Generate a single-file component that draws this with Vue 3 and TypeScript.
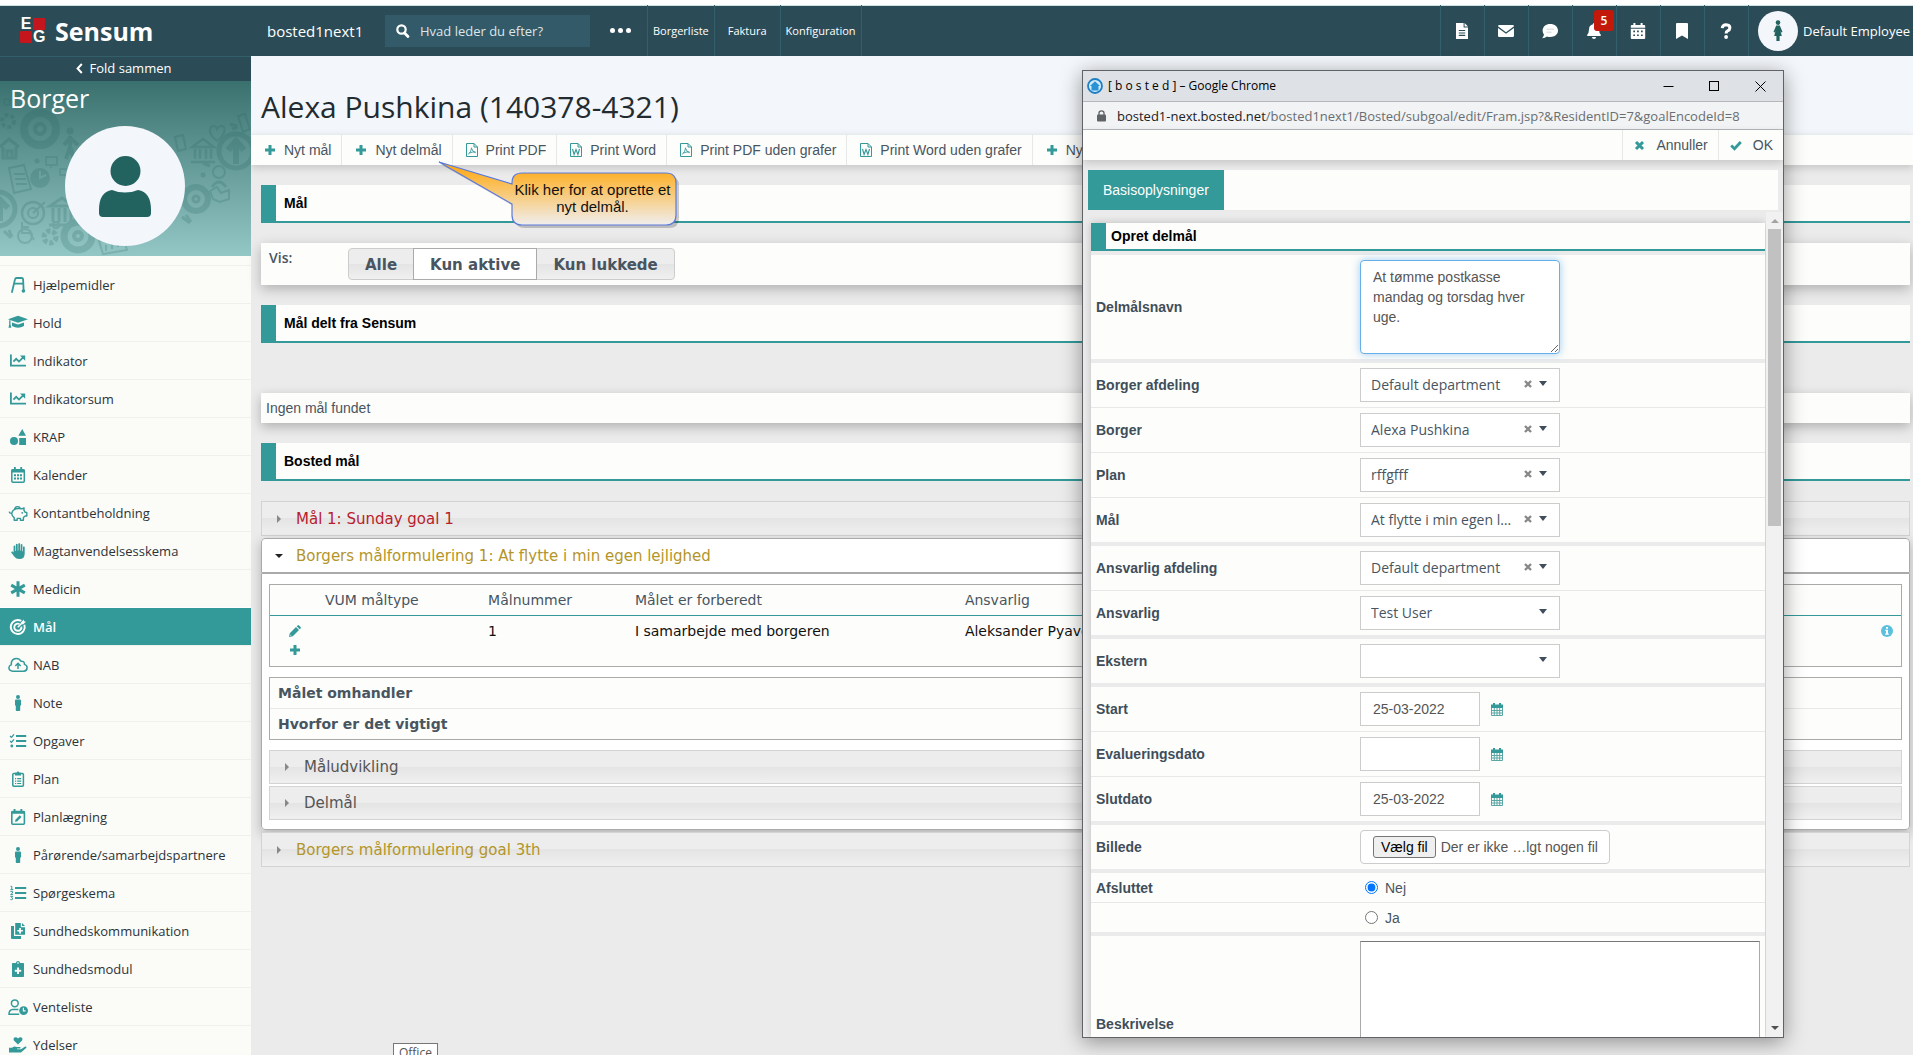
<script setup lang="ts">
import { ref } from 'vue'

interface MenuItem { label: string; icon: string; active?: boolean }
interface FieldRow {
  id: string
  label: string
  kind: 'area' | 'select' | 'date' | 'file' | 'radio' | 'description'
  value?: string
  clearable?: boolean
}

const st = 'fill="none" stroke="currentColor"'

/* Menu glyphs, drawn on a 20 x 16 grid */
const menuIcons: Record<string, string> = {
  walker: `<path ${st} stroke-width="1.8" stroke-linecap="round" d="M4 15L7 2.4Q7.3 1 8.6 1H13.6Q15 1 15.1 2.4L15.6 13M6.2 6.6H15.2"/><circle cx="15.4" cy="14" r="1.8"/>`,
  cap: `<path d="M10 .8L20 4.2 10 7.8 0 4.2zM4 7.4L10 9.5 16 7.4V11Q10 14.6 4 11zM1.2 5.2h1.3v4.4l.8 3.2H.5l.7-3.2z"/>`,
  chart: `<path ${st} stroke-width="1.8" d="M2.9 1.5V12.6H18M5.4 8.6L8.2 5.8 11 8.6 15.4 4.2"/><path d="M12 2.6h5.2v5.2z"/>`,
  shapes: `<path d="M14.2 0L18 6.8H10.3zM11.2 8.9H18V16H11.2z"/><circle cx="6" cy="12" r="4"/>`,
  calendar: `<rect ${st} stroke-width="1.5" x="3.8" y="2.8" width="12.5" height="12.4" rx="1.2"/><path d="M3.5 2.4h13v3h-13zM6 0h1.8v3H6zM12.3 0h1.8v3h-1.8zM6 7.2h2v2H6zM9 7.2h2v2H9zM12 7.2h2v2h-2zM6 10.4h2v2H6zM9 10.4h2v2H9zM12 10.4h2v2h-2z"/>`,
  piggy: `<path ${st} stroke-width="1.4" stroke-linejoin="round" d="M6.2 4.6Q8 3.4 11 3.6L14 3.8 16 2.8V5.4L17.2 7.4H18.8V11H17.2L15.4 12.6V15.2H12.4V13.4H9.2V15.2H6.2V12.6Q3.6 10.8 3.8 8Q4.2 5.8 6.2 4.6zM6.6 4.2A3 3 0 0 1 12.4 3.6M3.8 8.4Q1.4 8.6 1.2 6.6"/><circle cx="14.2" cy="7.8" r=".9"/>`,
  hand: `<path d="M5.6 3q.9-.8 1.7 0V8h.6V1.2q.9-1 1.8 0V7.6h.6V.6q.9-.9 1.8 0V7.6h.6V1.4q.9-.8 1.7 0V8.2h.6V3.8q.9-.7 1.7 0V10.5Q16.7 16 11.4 16 8 16 6.2 13.5L3.2 9.6Q3.4 8.2 4.8 8.5L5.6 9.4z"/>`,
  asterisk: `<path ${st} stroke-width="3" d="M10 .2V15.8M3.2 4.1L16.8 11.9M3.2 11.9L16.8 4.1"/>`,
  target: `<path ${st} stroke-width="1.9" d="M13.2 1.9A7 7 0 1 0 16.4 5.8M11.5 5A3.6 3.6 0 1 0 13.4 7.6"/><path ${st} stroke-width="1.6" d="M9.8 8.2L14.5 3.5"/><path d="M13 3.4L15.6.4l.4 1.8 1.9.5L15 5.4 13.2 5z"/>`,
  cloud: `<path ${st} stroke-width="1.5" d="M5 14.2Q1 13.9 .9 10.7 1 8.3 3.3 7.6 3 2 8.2 1.6 11.3 1.5 12.9 4.2 16.4 3.8 16.5 7.4 19.2 8.2 19.1 10.9 18.9 14 15.7 14.2zM10 12V6.5M7.3 9L10 6.3 12.7 9"/>`,
  person: `<circle cx="10" cy="2" r="2"/><path d="M7 5.6Q7 4.6 8 4.6H12Q13 4.6 13 5.6V10.4H12.2V15.2Q12.2 16 11.4 16H8.6Q7.8 16 7.8 15.2V10.4H7z"/>`,
  tasks: `<path d="M8 2h10.2v2.1H8zM8 7h10.2v2.1H8zM8 12h10.2v2.1H8z"/><path ${st} stroke-width="1.3" d="M2 3L3.5 4.4 6 1.3M2 8L3.5 9.4 6 6.3"/><circle cx="3.8" cy="13" r="1.4"/>`,
  clipboard: `<rect ${st} stroke-width="1.5" x="4.8" y="2.6" width="10.6" height="12.6" rx="1"/><path d="M7 1.7h1.6a1.5 1.5 0 0 1 2.9 0H13V4.6H7zM7 7h1.2v1.2H7zM9.2 7H13.2v1.2H9.2zM7 9.5h1.2v1.2H7zM9.2 9.5H13.2v1.2H9.2zM7 12h1.2v1H7zM9.2 12H13.2v1H9.2z"/>`,
  calendarEdit: `<rect ${st} stroke-width="1.6" x="3.8" y="2.6" width="12.6" height="12.6" rx="1"/><path d="M3.5 2h13.2v2.8H3.5zM5.6 0h1.9v3H5.6zM12.4 0h1.9v3h-1.9zM7 12.8L7.4 10.7 11.8 6.3 13.5 8 9.1 12.4z"/>`,
  numbered: `<path d="M7 2h11.2v2H7zM7 7h11.2v2H7zM7 12h11.2v2H7z"/><path ${st} stroke-width="1" d="M2.6 1.3H3.8V4.6M2.4 4.6H5.2M2.4 6.4H4.6V8L2.6 9.6H5M2.4 11.4H4.7L3.6 12.6Q5 12.8 4.6 14.2 3.8 15 2.4 14.5"/>`,
  copyMedical: `<path d="M3 3H6V13H13V16H4Q3 16 3 15zM7.2 0H12.8V4.2H17V11.8H7.2zM14 0L17 3.1H14z"/><path fill="#fbfbf8" d="M11.2 5h1.8v1.9h1.9v1.7H13v1.9h-1.8V8.6H9.3V6.9h1.9z"/>`,
  clipMedical: `<path d="M4 2.8Q4 2 4.8 2H7.8Q8.4 0 10 0T12.2 2H15.2Q16 2 16 2.8V15.2Q16 16 15.2 16H4.8Q4 16 4 15.2z"/><path fill="#fbfbf8" d="M9 6.5h2v2.2h2.2v2H11v2.2H9v-2.2H6.8v-2H9zM9.3 1.3h1.4v1.4H9.3z"/>`,
  userClock: `<circle ${st} stroke-width="1.5" cx="6.8" cy="4.3" r="3.4"/><path ${st} stroke-width="1.5" d="M10.4 10.6H4.6Q1 11 1 15.2H11.2"/><circle cx="15.6" cy="11.6" r="4.4"/><path stroke="#fbfbf8" stroke-width="1.2" fill="none" d="M15.4 8.8V11.9H17.6"/>`,
  handHeart: `<path d="M10 7.6L5.9 3.6Q4.8 1.8 6.4.6 8.4-.3 10 1.6 11.6-.3 13.6.6 15.2 1.8 14.1 3.6zM1 10.8H4Q6.4 8.9 8.4 9.9H12Q13 10.4 12.4 11.5H9V12.2H13L17.2 9.5Q18.8 9.6 18.4 10.8L13.6 15Q12.8 15.6 11.8 15.6H1z"/>`,
}

/* Header glyphs, 16 x 16 grid */
const topIcons: Record<string, string> = {
  file: `<path fill-rule="evenodd" d="M2 0H9.6V4.4H14V16H2zM10.6 0L14 3.4H10.6zM4.8 7v1.1h6.4V7zM4.8 9.4v1.1h6.4V9.4zM4.8 11.8v1.1h6.4v-1.1z"/>`,
  mail: `<path d="M0 3.2Q0 2 1.4 2H14.6Q16 2 16 3.2L8 9.3zM0 5L8 10.8 16 5V12.8Q16 14 14.6 14H1.4Q0 14 0 12.8z"/>`,
  chat: `<path fill-rule="evenodd" d="M8.2 1C12.6 1 16 3.7 16 7.6S12.6 14 8.2 14Q6.4 14 5 13.4 3 15.2.2 15.2 1.8 13.4 2 11.5.6 9.9.6 7.6C.6 3.7 4 1 8.2 1z"/><path fill="#dfe3e8" d="M4.6 5.4h7.4v1.5H4.6zM4.6 8.6h5v1.5h-5z"/>`,
  bell: `<path d="M8 0Q9 0 9 1.3 13 2.2 13 6.6 13 10.3 15 11.9 15 13 14 13H2Q1 13 1 11.9 3 10.3 3 6.6 3 2.2 7 1.3 7 0 8 0zM5.9 14H10.1Q9.8 16 8 16T5.9 14z"/>`,
  calendar: `<path fill-rule="evenodd" d="M3.4 0h2v2h5.2V0h2v2H14.2Q15.2 2 15.2 3V4.7H.8V3Q.8 2 1.8 2H3.4zM.8 5.8H15.2V15Q15.2 16 14.2 16H1.8Q.8 16 .8 15zM3.3 7.6v1.7H5V7.6zM7.1 7.6v1.7h1.7V7.6zM11 7.6v1.7h1.7V7.6zM3.3 11.4v1.7H5v-1.7zM7.1 11.4v1.7h1.7v-1.7zM11 11.4v1.7h1.7v-1.7z"/>`,
  bookmark: `<path d="M2 1Q2 0 3 0H13Q14 0 14 1V16L8 12.6 2 16z"/>`,
  help: `<path ${st} stroke-width="3" d="M4.2 5.2Q4.6 1.7 8.2 1.7 11.9 1.9 11.9 4.9 11.8 6.9 9.6 7.9 8.1 8.6 8.1 10.6"/><circle cx="8.1" cy="14" r="1.9"/>`,
}

const menu: MenuItem[] = [
  { label: 'Hjælpemidler', icon: 'walker' },
  { label: 'Hold', icon: 'cap' },
  { label: 'Indikator', icon: 'chart' },
  { label: 'Indikatorsum', icon: 'chart' },
  { label: 'KRAP', icon: 'shapes' },
  { label: 'Kalender', icon: 'calendar' },
  { label: 'Kontantbeholdning', icon: 'piggy' },
  { label: 'Magtanvendelsesskema', icon: 'hand' },
  { label: 'Medicin', icon: 'asterisk' },
  { label: 'Mål', icon: 'target', active: true },
  { label: 'NAB', icon: 'cloud' },
  { label: 'Note', icon: 'person' },
  { label: 'Opgaver', icon: 'tasks' },
  { label: 'Plan', icon: 'clipboard' },
  { label: 'Planlægning', icon: 'calendarEdit' },
  { label: 'Pårørende/samarbejdspartnere', icon: 'person' },
  { label: 'Spørgeskema', icon: 'numbered' },
  { label: 'Sundhedskommunikation', icon: 'copyMedical' },
  { label: 'Sundhedsmodul', icon: 'clipMedical' },
  { label: 'Venteliste', icon: 'userClock' },
  { label: 'Ydelser', icon: 'handHeart' },
]

const topTools = [
  { icon: 'file', name: 'Dokumenter' },
  { icon: 'mail', name: 'Post' },
  { icon: 'chat', name: 'Beskeder' },
  { icon: 'bell', name: 'Notifikationer', badge: 5 },
  { icon: 'calendar', name: 'Kalender' },
  { icon: 'bookmark', name: 'Bogmærker' },
  { icon: 'help', name: 'Hjælp' },
]

const plus = '<path d="M4.5 1h3v3.5H11v3H7.5V11h-3V7.5H1v-3h3.5z"/>'
const docFrame = 'fill="none" stroke="currentColor" stroke-width="1" d="M.5 .5H8L11.5 4V13.5H.5zM8 .5V4H11.5"'
const pdf = `<path ${docFrame}/><path fill="none" stroke="currentColor" stroke-width=".9" d="M2.3 11.4Q5.3 8.5 5.7 4.6M5.7 5.5Q6.3 8.6 9.7 9.8M3.4 10Q6 8.7 9.6 9"/>`
const word = `<path ${docFrame}/><path fill="none" stroke="currentColor" stroke-width="1.1" d="M2.5 6L4.1 11.5 6 6.6 7.9 11.5 9.5 6"/>`
const actions = [
  { label: 'Nyt mål', icon: plus, box: '0 0 12 12' },
  { label: 'Nyt delmål', icon: plus, box: '0 0 12 12' },
  { label: 'Print PDF', icon: pdf, box: '0 0 12 14' },
  { label: 'Print Word', icon: word, box: '0 0 12 14' },
  { label: 'Print PDF uden grafer', icon: pdf, box: '0 0 12 14' },
  { label: 'Print Word uden grafer', icon: word, box: '0 0 12 14' },
  { label: 'Nyt notat', icon: plus, box: '0 0 12 12' },
]

const filters = ['Alle', 'Kun aktive', 'Kun lukkede']
const activeFilter = ref('Kun aktive')

const groups: FieldRow[][] = [
  [{ id: 'name', label: 'Delmålsnavn', kind: 'area' }],
  [
    { id: 'dept', label: 'Borger afdeling', kind: 'select', value: 'Default department', clearable: true },
    { id: 'citizen', label: 'Borger', kind: 'select', value: 'Alexa Pushkina', clearable: true },
    { id: 'plan', label: 'Plan', kind: 'select', value: 'rffgfff', clearable: true },
    { id: 'goal', label: 'Mål', kind: 'select', value: 'At flytte i min egen lejlighed', clearable: true },
  ],
  [
    { id: 'respdept', label: 'Ansvarlig afdeling', kind: 'select', value: 'Default department', clearable: true },
    { id: 'resp', label: 'Ansvarlig', kind: 'select', value: 'Test User' },
  ],
  [{ id: 'ext', label: 'Ekstern', kind: 'select', value: '' }],
  [
    { id: 'start', label: 'Start', kind: 'date', value: '25-03-2022' },
    { id: 'eval', label: 'Evalueringsdato', kind: 'date', value: '' },
    { id: 'end', label: 'Slutdato', kind: 'date', value: '25-03-2022' },
  ],
  [{ id: 'image', label: 'Billede', kind: 'file' }],
  [
    { id: 'no', label: 'Afsluttet', kind: 'radio', value: 'Nej' },
    { id: 'yes', label: '', kind: 'radio', value: 'Ja' },
  ],
  [{ id: 'desc', label: 'Beskrivelse', kind: 'description' }],
]

const subgoal = ref('At tømme postkasse mandag og torsdag hver uge.')
const closed = ref('Nej')
</script>

<template>
  <div class="app">
    <header class="top">
      <div class="brand">
        <span class="logo" aria-hidden="true"><b>E</b><i></i><i></i><b>G</b></span>
        <span class="brand-name">Sensum</span>
      </div>
      <span class="tenant">bosted1next1</span>
      <label class="search">
        <svg width="13" height="14" viewBox="0 0 13 14" aria-hidden="true"><circle cx="5.5" cy="5.5" r="4.2" fill="none" stroke="#fff" stroke-width="2.2" /><path d="M8.5 9L12 12.6" stroke="#fff" stroke-width="2.8" stroke-linecap="round" /></svg>
        <input type="search" placeholder="Hvad leder du efter?" aria-label="Søg">
      </label>
      <button class="dots" aria-label="Flere"><i></i><i></i><i></i></button>
      <nav class="links">
        <a href="#">Borgerliste</a>
        <a href="#" class="mid">Faktura</a>
        <a href="#">Konfiguration</a>
      </nav>
      <div class="tools">
        <button v-for="t in topTools" :key="t.icon" class="tool" :aria-label="t.name">
          <svg width="16" height="16" viewBox="0 0 16 16" fill="currentColor" v-html="topIcons[t.icon]"></svg>
          <span v-if="t.badge" class="badge">{{ t.badge }}</span>
        </button>
        <a href="#" class="user">
          <span class="user-pic">
            <svg width="12" height="21" viewBox="0 0 12 21" fill="#22625f"><circle cx="6" cy="2.6" r="2.3" /><path d="M4.2 5.5H7.8L10.5 12 9.3 12.6 8.5 11 9.8 16H7.6V21H4.4V16H2.2L3.5 11 2.7 12.6 1.5 12z" /></svg>
          </span>
          Default Employee
        </a>
      </div>
    </header>

    <div class="frame">
      <aside class="side">
        <button class="fold">
          <svg width="7" height="11" viewBox="0 0 7 11" aria-hidden="true"><path d="M5.8 1L1.6 5.5 5.8 10" fill="none" stroke="#fff" stroke-width="2" /></svg>
          Fold sammen
        </button>
        <div class="hero">
          <svg class="pattern" viewBox="0 0 251 175" preserveAspectRatio="xMidYMid slice" fill="none" stroke="#22625f" aria-hidden="true">
            <circle cx="40" cy="48" r="16" stroke-width="8" /><circle cx="40" cy="48" r="5" stroke-width="4" />
            <circle cx="236" cy="70" r="17" stroke-width="5" /><path d="M236 83V62M228 69L236 60 244 69" stroke-width="6" />
            <circle cx="196" cy="118" r="12" stroke-width="6" /><circle cx="196" cy="118" r="3" stroke-width="3" />
            <circle cx="78" cy="155" r="14" stroke-width="7" /><circle cx="78" cy="155" r="4" stroke-width="4" />
            <circle cx="-2" cy="128" r="17" stroke-width="5" /><path d="M0 140V120M-7 127L0 119 8 127" stroke-width="6" />
            <circle cx="8" cy="40" r="6" stroke-width="4" stroke-dasharray="4 2" /><circle cx="7" cy="21" r="3" stroke-width="1.5" />
            <path d="M0 66L9 58 19 66M3 66V77H16V66M7 77V70H12V77" stroke-width="3" />
            <path d="M9 87L24 84 31 108 14 112zM14 93H25M15 98H26M16 103H27" stroke-width="2" />
            <circle cx="40" cy="97" r="10" fill="#22625f" stroke="none" /><path d="M40 90V97L46 94" stroke="#6fa9a5" stroke-width="2" />
            <circle cx="33" cy="132" r="11" stroke-width="2.5" /><circle cx="33" cy="132" r="5" stroke-width="2" /><path d="M33 132L45 121" stroke-width="2" />
            <path d="M50 125L62 117 74 125zM53 127V141M59 127V141M65 127V141M71 127V141M49 144H75" stroke-width="3" />
            <circle cx="70" cy="50" r="3.5" fill="#22625f" stroke="none" /><path d="M70 55V66L66 78M70 66L74 78M64 64L70 57 78 64" stroke-width="4" />
            <path d="M46 76H57V84H46zM51 84V87M60 88H68V94H60z" stroke-width="1.5" />
            <path d="M217 60Q207 52 211 46 215 43 217 48 220 43 224 46 227 52 217 60z" stroke-width="2" />
            <path d="M192 66L203 58 214 66zM195 68V78M200 68V78M206 68V78M211 68V78M191 81H215" stroke-width="2.5" />
            <path d="M175 56L183 54 186 68 178 70zM238 35L245 33 250 48 243 51z" stroke-width="2" />
            <circle cx="219" cy="91" r="6" stroke-width="2" /><path d="M212 106Q219 96 226 106" stroke-width="3" />
            <path d="M210 110L217 106 221 112 229 109V118L220 121 213 118z" stroke-width="2" />
            <circle cx="50" cy="156" r="6" stroke-width="5" stroke-dasharray="4 2" /><circle cx="56" cy="144" r="3" stroke-width="2" />
            <path d="M22 141V152H30L34 159M22 146H29" stroke-width="2" /><circle cx="25" cy="155" r="7" stroke-width="2" />
            <path d="M99 160L122 154 127 169 103 173zM106 170V164M112 168V160M118 166V158" stroke-width="2" />
            <path d="M4 150L11 157M9 149L12 156M230 43L237 45M232 48L238 46M182 136L190 142M186 134L191 141M203 82L210 85" stroke-width="3" />
            <circle cx="37" cy="80" r="2.5" fill="#22625f" stroke="none" /><circle cx="203" cy="94" r="2.5" fill="#22625f" stroke="none" />
          </svg>
          <h2>Borger</h2>
          <div class="portrait">
            <svg width="52" height="61" viewBox="0 0 52 61" fill="#22625f" aria-hidden="true"><ellipse cx="26.5" cy="15" rx="15" ry="15" /><path d="M13 34Q19 36.5 26 36.5T39 34Q52 36 52 54V57Q52 61 48 61H4Q0 61 0 57V54Q0 36 13 34z" /></svg>
          </div>
        </div>
        <nav class="menu">
          <a v-for="m in menu" :key="m.label" href="#" :class="{ active: m.active }">
            <svg width="20" height="16" viewBox="0 0 20 16" fill="currentColor" aria-hidden="true" v-html="menuIcons[m.icon]"></svg>
            <span>{{ m.label }}</span>
          </a>
        </nav>
      </aside>

      <main class="main">
        <h1>Alexa Pushkina (140378-4321)</h1>
        <div class="actions">
          <button v-for="a in actions" :key="a.label">
            <svg width="12" height="14" :viewBox="a.box" fill="currentColor" aria-hidden="true" v-html="a.icon"></svg>
            {{ a.label }}
          </button>
        </div>
        <div class="content">
          <h3 class="bar">Mål</h3>
          <section class="card vis">
            <span class="vis-label">Vis:</span>
            <div class="segments">
              <button v-for="f in filters" :key="f" :class="{ on: f === activeFilter }" @click="activeFilter = f">{{ f }}</button>
            </div>
          </section>
          <h3 class="bar">Mål delt fra Sensum</h3>
          <section class="card none">Ingen mål fundet</section>
          <h3 class="bar">Bosted mål</h3>

          <div class="accordion">
            <button class="fold-head red"><i class="arrow"></i>Mål 1: Sunday goal 1</button>
            <div class="opened">
              <button class="fold-head open gold"><i class="arrow down"></i>Borgers målformulering 1: At flytte i min egen lejlighed</button>
              <div class="body">
                <table class="goals">
                  <thead>
                    <tr><th class="c-edit"></th><th class="c-type">VUM måltype</th><th class="c-num">Målnummer</th><th class="c-prep">Målet er forberedt</th><th>Ansvarlig</th><th class="c-info">Info</th></tr>
                  </thead>
                  <tbody>
                    <tr>
                      <td>
                        <div class="row-tools">
                          <button aria-label="Rediger"><svg width="12" height="12" viewBox="0 0 12 12" fill="currentColor"><path fill-rule="evenodd" d="M0 12L.8 8.2 7 2 10 5 3.8 11.2zM1.6 9.4L1.3 10.7 2.6 10.4zM7.7 1.3L8.6.4Q9.3-.2 10 .4L11.6 2Q12.2 2.7 11.6 3.4L10.7 4.3z" /></svg></button>
                          <button aria-label="Tilføj"><svg width="12" height="12" viewBox="0 0 12 12" fill="currentColor" v-html="plus"></svg></button>
                        </div>
                      </td>
                      <td></td><td>1</td><td>I samarbejde med borgeren</td><td>Aleksander Pyavchenko</td>
                      <td class="info"><svg width="12" height="12" viewBox="0 0 12 12" aria-label="Info"><circle cx="6" cy="6" r="6" fill="#5bc0de" /><path fill="#fff" d="M5 2h2v1.7H5zM4.3 4.8H7V8.6h.8V9.8H4.2V8.6H5V6h-.7z" /></svg></td>
                    </tr>
                  </tbody>
                </table>
                <dl class="facts"><dt>Målet omhandler</dt><dt>Hvorfor er det vigtigt</dt></dl>
                <button class="fold-head"><i class="arrow"></i>Måludvikling</button>
                <button class="fold-head"><i class="arrow"></i>Delmål</button>
              </div>
            </div>
            <button class="fold-head gold"><i class="arrow"></i>Borgers målformulering goal 3th</button>
          </div>
        </div>
      </main>
    </div>

    <div class="callout">
      <svg width="248" height="72" viewBox="0 0 248 72" aria-hidden="true">
        <defs>
          <linearGradient id="amber" x1="0" y1="0" x2="0" y2="1"><stop offset="0" stop-color="#ffa40a" /><stop offset=".2" stop-color="#fdb330" /><stop offset="1" stop-color="#f0eeee" /></linearGradient>
        </defs>
        <path transform="translate(3 3)" fill="#000" opacity=".2" d="M84 12H228Q238 12 238 22V54Q238 64 228 64H84Q74 64 74 54V43L1 1 74 23V22Q74 12 84 12z" />
        <path fill="url(#amber)" stroke="#5b7bdc" stroke-width="1.2" d="M84 12H228Q238 12 238 22V54Q238 64 228 64H84Q74 64 74 54V43L1 1 74 23V22Q74 12 84 12z" />
      </svg>
      <p>Klik her for at oprette et nyt delmål.</p>
    </div>
    <div class="hint">Office</div>

    <section class="popup">
      <div class="titlebar">
        <svg width="16" height="16" viewBox="0 0 16 16" aria-hidden="true"><circle cx="8" cy="8" r="7" fill="#d5ebf8" stroke="#1d7fc4" stroke-width="1.8" /><path d="M8 3.2L13 8H11.5V12.5H4.5V8H3z" fill="#2a93d6" /></svg>
        <span>[ b o s t e d ] – Google Chrome</span>
        <div class="winbtns">
          <button aria-label="Minimer"><svg width="11" height="11" viewBox="0 0 11 11"><path d="M.5 5.5H10.5" stroke="#000" /></svg></button>
          <button aria-label="Maksimer"><svg width="11" height="11" viewBox="0 0 11 11"><rect x=".5" y=".5" width="9" height="9" fill="none" stroke="#000" /></svg></button>
          <button aria-label="Luk"><svg width="11" height="11" viewBox="0 0 11 11"><path d="M.5 .5L10.5 10.5M10.5 .5L.5 10.5" stroke="#000" /></svg></button>
        </div>
      </div>
      <div class="address">
        <svg width="9" height="12" viewBox="0 0 9 12" aria-hidden="true"><rect x="0" y="4.5" width="9" height="7" rx="1" fill="#5f6368" /><path d="M2 5V3Q2 .8 4.5.8T7 3V5" fill="none" stroke="#5f6368" stroke-width="1.3" /></svg>
        <span><b>bosted1-next.bosted.net</b>/bosted1next1/Bosted/subgoal/edit/Fram.jsp?&amp;ResidentID=7&amp;goalEncodeId=8</span>
      </div>
      <div class="commands">
        <button><svg width="11" height="11" viewBox="0 0 11 11"><path d="M2 2L9 9M9 2L2 9" stroke="currentColor" stroke-width="3" /></svg>Annuller</button>
        <button><svg width="12" height="11" viewBox="0 0 12 11"><path d="M1.2 5.5L4.5 8.7 10.8 2" fill="none" stroke="currentColor" stroke-width="2.8" /></svg>OK</button>
      </div>
      <div class="tabs"><button>Basisoplysninger</button></div>
      <div class="pane">
        <form class="form" @submit.prevent>
          <h3>Opret delmål</h3>
          <div v-for="(g, gi) in groups" :key="gi" class="group">
            <div v-for="r in g" :key="r.id" :class="['field', r.kind]">
              <span v-if="r.kind === 'radio'" class="name">{{ r.label }}</span>
              <label v-else class="name" :for="r.id">{{ r.label }}</label>
              <textarea v-if="r.kind === 'area'" :id="r.id" v-model="subgoal" class="text"></textarea>
              <div v-else-if="r.kind === 'select'" class="picker">
                <select :id="r.id"><option>{{ r.value }}</option></select>
                <button v-if="r.clearable" type="button" class="clear" aria-label="Ryd"><svg width="8" height="8" viewBox="0 0 8 8"><path d="M1 1L7 7M7 1L1 7" stroke="#888" stroke-width="2.4" /></svg></button>
                <i class="caret"></i>
              </div>
              <div v-else-if="r.kind === 'date'" class="dated">
                <input :id="r.id" type="text" :value="r.value">
                <button type="button" aria-label="Vælg dato"><svg width="12" height="13" viewBox="0 0 12 13"><path fill="none" stroke="#5aa7a5" d="M.5 4V12.5H11.5V4M.5 7.5H11.5M.5 10H11.5M3.3 5V12.5M6 5V12.5M8.7 5V12.5" /><path fill="#339999" d="M0 1.5H2V0H4V1.5H8V0H10V1.5H12V5H0z" /></svg></button>
              </div>
              <div v-else-if="r.kind === 'file'" class="upload">
                <input :id="r.id" type="file">
                <span class="pick">Vælg fil</span><span>Der er ikke …lgt nogen fil</span>
              </div>
              <label v-else-if="r.kind === 'radio'" class="choice"><input v-model="closed" type="radio" name="closed" :value="r.value">{{ r.value }}</label>
              <textarea v-else :id="r.id" class="long"></textarea>
            </div>
          </div>
        </form>
        <div class="scroll" aria-hidden="true"><i class="up"></i><span></span><i class="dn"></i></div>
      </div>
    </section>
  </div>
</template>

<style>
html, body, #app { height: 100%; margin: 0; }
body { overflow: hidden; }
</style>

<style scoped>
* { box-sizing: border-box; }
button { border: 0; padding: 0; margin: 0; background: none; font: inherit; color: inherit; text-align: left; }
a { color: inherit; text-decoration: none; }
svg { display: block; flex: none; overflow: visible; }
h1, h2, h3, p, dl { margin: 0; font-weight: 400; }

.app {
  position: relative;
  display: flex;
  flex-direction: column;
  height: 100vh;
  overflow: hidden;
  background: #ebebeb;
  font: 14px/20px "Liberation Sans", Arial, sans-serif;
  color: #485561;
}

/* top bar */
.top {
  flex: none;
  display: flex;
  align-items: stretch;
  height: 56px;
  border-top: 5px solid #fff;
  background: #2b4c57;
  box-shadow: inset 0 1px #cfe0e0;
  color: #fff;
  font-family: "Open Sans", sans-serif;
}
.brand { display: flex; align-items: center; gap: 10px; width: 251px; padding-left: 20px; }
.logo { display: grid; grid-template-columns: 12px 12px; grid-auto-rows: 12px; gap: 1px; }
.logo i { background: #c4161c; border-radius: 1px; }
.logo b { font: 700 16px/12px "Liberation Sans", Arial, sans-serif; text-align: center; }
.brand-name { font-size: 25px; line-height: 36px; font-weight: 700; }
.tenant { align-self: center; width: 134px; padding-left: 16px; font-size: 15px; }
.search { align-self: center; display: flex; align-items: center; gap: 11px; width: 205px; height: 32px; padding: 0 11px; background: #335a68; }
.search input { flex: 1; min-width: 0; border: 0; padding: 0; outline: 0; background: none; color: #fff; font: 13px/20px "Open Sans", sans-serif; }
.search input::placeholder { color: #dde6e9; opacity: 1; }
.dots { display: flex; align-items: center; justify-content: center; gap: 3px; width: 57px; padding-right: 3px; padding-left: 6px; }
.dots i { width: 5px; height: 5px; border-radius: 50%; background: #fff; }
.links { display: flex; font-size: 11px; font-weight: 500; border-left: 1px solid #335f6b; }
.links a { display: flex; align-items: center; padding: 0 5px; border-right: 1px solid #335f6b; }
.links .mid { padding: 0 13px; }
.tools { display: flex; margin-left: auto; }
.tool { position: relative; display: flex; align-items: center; justify-content: center; width: 44px; border-left: 1px solid #335f6b; }
.badge { position: absolute; top: 5px; left: 21px; width: 20px; height: 21px; border-radius: 3px; background: #c2190b; font-size: 12px; line-height: 21px; font-weight: 600; text-align: center; }
.user { display: flex; align-items: center; gap: 5px; padding: 0 3px 0 9px; border-left: 1px solid #335f6b; font-size: 13px; white-space: nowrap; }
.user-pic { display: flex; align-items: center; justify-content: center; width: 40px; height: 40px; border-radius: 50%; background: #f3f6fa; }

.frame { flex: 1; min-height: 0; display: flex; }

/* side menu */
.side { flex: none; width: 251px; background: #fbfbf8; font-family: "Open Sans", sans-serif; }
.fold { display: flex; align-items: center; justify-content: center; gap: 7px; width: 100%; height: 25px; padding: 0 4px 2px 0; background: #2b4c57; border-top: 1px solid #335f6b; color: #fff; font-size: 13px; }
.hero { position: relative; height: 175px; overflow: hidden; background: linear-gradient(#3a716f, #93c7c5); color: #fff; }
.pattern { position: absolute; inset: 0; width: 100%; height: 100%; opacity: .2; }
.hero h2 { position: relative; padding: 0 10px; font-size: 25px; line-height: 34px; }
.portrait { position: relative; display: flex; justify-content: center; align-items: center; width: 120px; height: 120px; margin: 11px 0 0 65px; border-radius: 50%; background: #f3f6fa; }
.menu { padding-top: 9px; }
.menu a { display: flex; align-items: center; gap: 5px; height: 38px; padding-left: 8px; border-top: 1px solid #f0f0ee; color: #2b3338; font-size: 13px; white-space: nowrap; }
.menu svg { color: #339999; }
.menu .active, .menu .active svg { background: #339999; color: #fff; }
.menu .active { font-weight: 600; border-color: #fff; }

/* page */
.main { flex: 1; min-width: 0; }
h1 { height: 78px; padding: 29px 10px 0; background: #f3f6fa; color: #222b30; font: 30px/44px "Open Sans", sans-serif; }
.actions { display: flex; height: 31px; border-top: 1px solid #e6ebee; background: #fdfdfb; box-shadow: 0 3px 8px rgba(0, 0, 0, .16); }
.actions button { display: flex; align-items: center; gap: 8px; padding: 0 10px 0 13px; border-right: 1px solid #e6e8e8; white-space: nowrap; }
.actions svg { color: #339999; }
.content { display: flex; flex-direction: column; gap: 20px; padding: 20px 3px 0 10px; }
.bar { height: 38px; border-left: 15px solid #339999; box-shadow: inset 0 -2px #339999; padding-left: 8px; background: #fdfdfb; color: #000; font-size: 14px; font-weight: 700; line-height: 37px; }
.card { background: #fdfdfb; box-shadow: 0 4px 12px rgba(0, 0, 0, .25); }
.vis { display: flex; height: 42px; padding: 5px 8px; }
.vis-label { width: 79px; font: 600 14px/20px "Open Sans", sans-serif; }
.segments { display: flex; height: 32px; border: 1px solid #ccc; border-radius: 4px; background: linear-gradient(#ededed 50%, #e4e4e4 50%, #f0f0f0); font: 700 15px/32px "DejaVu Sans", Verdana, sans-serif; }
.segments button { padding: 0 16px; white-space: nowrap; }
.segments .on { margin: -1px 0; border: 1px solid #aaa; background: #fff; }
.none { height: 30px; margin-top: 30px; padding: 5px; }

.accordion { display: flex; flex-direction: column; gap: 2px; font-family: "DejaVu Sans", Verdana, sans-serif; }
.fold-head { display: flex; align-items: center; width: 100%; height: 35px; padding-left: 15px; border: 1px solid #d3d3d3; background: linear-gradient(#ededed 50%, #e4e4e4 50%, #f0f0f0); color: #555; font-size: 15px; white-space: nowrap; }
.arrow { width: 19px; height: 8px; }
.arrow::before { content: ""; display: block; width: 0; height: 0; border: 4px solid transparent; border-left-color: #888; border-right: 0; }
.arrow.down::before { margin: 2px 0 0 -2px; border: 4px solid transparent; border-top-color: #222; border-bottom: 0; }
.red { color: #b81d2c; }
.gold { color: #b3952a; }
.opened { border-radius: 4px; box-shadow: 0 4px 12px rgba(0, 0, 0, .25); background: #fff; }
.open { border-color: #aaa; border-radius: 4px 4px 0 0; background: #fff; }
.body { display: flex; flex-direction: column; gap: 10px; padding: 10px 7px 9px; border: 1px solid #aaa; border-radius: 0 0 4px 4px; }
.goals { width: 100%; table-layout: fixed; border: 1px solid #aaa; border-spacing: 0; background: #fdfdfb; font-size: 14px; }
.goals th { height: 31px; padding: 0 8px; border-bottom: 1px solid #339999; font-weight: 400; text-align: left; white-space: nowrap; }
.goals td { height: 50px; padding: 5px 8px; vertical-align: top; color: #111; white-space: nowrap; }
.goals .c-edit { width: 47px; }
.c-type { width: 10%; }
.c-num { width: 9%; }
.goals .c-prep { width: 330px; }
.goals .c-info { width: 152px; }
.row-tools { display: flex; flex-direction: column; gap: 7px; padding: 4px 0 0 11px; color: #339999; }
.row-tools button { display: block; width: 12px; height: 12px; }
.goals .info svg { margin: 4px 0 0 auto; }
.facts { border: 1px solid #aaa; background: #fdfdfb; }
.facts dt { height: 30px; padding: 5px 8px; font-weight: 700; font-size: 14px; }
.facts dt + dt { height: 31px; border-top: 1px solid #e8e8e8; }
.body .fold-head { height: 34px; }
.body .fold-head + .fold-head { margin-top: -8px; }

/* callout and taskbar hint */
.callout { position: absolute; left: 438px; top: 161px; width: 248px; }
.callout p { position: absolute; left: 74px; right: 13px; top: 20px; color: #111; font-size: 15px; line-height: 17px; text-align: center; }
.hint { position: absolute; left: 393px; top: 1043px; padding: 0 5px; border: 1px solid #777; background: #fff; color: #555; font: 12px/18px "Open Sans", sans-serif; }

/* pop-up window */
.popup {
  position: absolute;
  top: 70px;
  right: 129px;
  bottom: 17px;
  width: 702px;
  display: flex;
  flex-direction: column;
  overflow: hidden;
  border: 1px solid #5f6368;
  background: #ebebeb;
  box-shadow: 0 4px 20px rgba(0, 0, 0, .4);
}
.titlebar { flex: none; display: flex; align-items: center; gap: 5px; height: 31px; padding-left: 4px; border-bottom: 1px solid #b4b6b9; background: #dee1e6; color: #000; font: 12px/20px "Open Sans", sans-serif; }
.winbtns { display: flex; margin-left: auto; }
.winbtns button { display: flex; justify-content: center; width: 46px; }
.address { flex: none; display: flex; align-items: center; gap: 11px; height: 28px; padding-left: 14px; border-bottom: 1px solid #b4b6b9; background: #f1f3f4; color: #6a6e72; font: 13px/20px "Open Sans", sans-serif; white-space: nowrap; }
.address b { color: #202124; font-weight: 400; }
.commands { flex: none; display: flex; justify-content: flex-end; height: 30px; background: #fdfdfb; box-shadow: 0 3px 8px rgba(0, 0, 0, .16); }
.commands button { display: flex; align-items: center; gap: 11px; padding: 0 10px 0 11px; border-left: 1px solid #e6e8e8; }
.commands svg { color: #339999; }
.tabs { flex: none; display: flex; height: 40px; margin: 10px 5px 0; background: #fdfdfb; }
.tabs button { padding: 0 15px; background: #339999; color: #fff; }
.pane { flex: 1; min-height: 0; display: flex; margin-top: 2px; padding-left: 8px; }
.form { flex: 1; min-width: 0; margin-top: 11px; box-shadow: 0 0 8px rgba(0, 0, 0, .2); background: #ebebeb; }
.form h3 { height: 28px; border-left: 15px solid #339999; box-shadow: inset 0 -2px #339999; padding-left: 5px; background: #fdfdfb; color: #000; font-size: 14px; font-weight: 700; line-height: 26px; }
.group { margin-top: 4px; background: #fdfdfb; }
.field { display: grid; grid-template-columns: 269px 1fr; align-items: center; height: 44px; }
.field + .field { height: 45px; border-top: 1px solid #e8e8e8; }
.field.area { height: 104px; }
.field.radio { height: 29px; }
.field.radio + .radio { height: 30px; }
.field.description { height: 176px; }
.name { padding-left: 5px; color: #3f4e5a; font-weight: 700; }
.text { width: 200px; height: 94px; padding: 6px 12px; border: 1px solid #66afe9; border-radius: 4px; outline: 0; box-shadow: 0 0 8px rgba(102, 175, 233, .6); background: #fff; color: #555; font: inherit; }
.picker { position: relative; display: flex; width: 200px; }
.picker select { appearance: none; width: 100%; height: 34px; padding: 0 47px 0 10px; border: 1px solid #ccc; border-radius: 0; background: #fff; color: #485561; font: 14px/20px "Open Sans", sans-serif; text-overflow: ellipsis; }
.clear { position: absolute; right: 28px; top: 12px; }
.caret { position: absolute; right: 13px; top: 13px; border: 4px solid transparent; border-top: 5px solid #3f4e5a; border-bottom: 0; }
.dated { display: flex; align-items: center; gap: 11px; }
.dated input { width: 120px; height: 34px; padding: 0 12px; border: 1px solid #ccc; background: #fff; color: #555; font: inherit; }
.upload { position: relative; display: flex; align-items: center; gap: 5px; width: 250px; height: 34px; padding-left: 12px; border: 1px solid #ccc; border-radius: 4px; background: #fff; color: #555; white-space: nowrap; }
.upload input { position: absolute; inset: 0; width: 100%; opacity: 0; }
.pick { padding: 0 7px; border: 1px solid #767676; border-radius: 3px; background: #efefef; color: #000; }
.choice { display: flex; align-items: center; gap: 7px; padding-left: 5px; }
.choice input { width: 13px; height: 13px; margin: 0; accent-color: #0075ff; }
.long { width: calc(100% - 5px); height: 166px; border: 1px solid #aaa; border-top-color: #777; background: #fff; resize: none; }
.scroll { flex: none; display: flex; flex-direction: column; width: 17px; margin-left: 1px; padding: 0 2px; background: #f1f1f1; }
.scroll span { height: 297px; margin: 6px 0 auto; background: #c1c1c1; }
.scroll i { width: 0; margin: 7px auto 0; border: 4px solid transparent; }
.scroll .up { border-top: 0; border-bottom-color: #a3a3a3; }
.scroll .dn { margin: 0 auto 7px; border-bottom: 0; border-top-color: #505050; }
</style>
